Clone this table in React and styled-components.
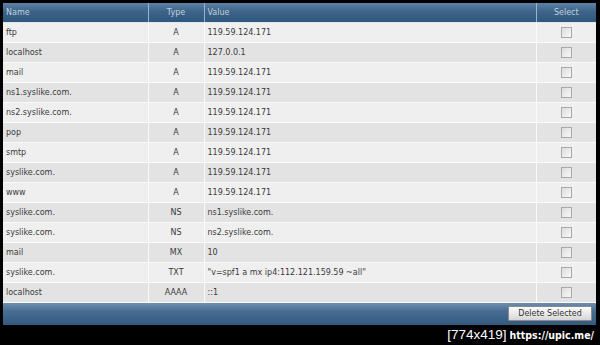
import React from "react";
import styled, { createGlobalStyle } from "styled-components";

const records = [
  { name: "ftp", type: "A", value: "119.59.124.171" },
  { name: "localhost", type: "A", value: "127.0.0.1" },
  { name: "mail", type: "A", value: "119.59.124.171" },
  { name: "ns1.syslike.com.", type: "A", value: "119.59.124.171" },
  { name: "ns2.syslike.com.", type: "A", value: "119.59.124.171" },
  { name: "pop", type: "A", value: "119.59.124.171" },
  { name: "smtp", type: "A", value: "119.59.124.171" },
  { name: "syslike.com.", type: "A", value: "119.59.124.171" },
  { name: "www", type: "A", value: "119.59.124.171" },
  { name: "syslike.com.", type: "NS", value: "ns1.syslike.com." },
  { name: "syslike.com.", type: "NS", value: "ns2.syslike.com." },
  { name: "mail", type: "MX", value: "10" },
  { name: "syslike.com.", type: "TXT", value: '"v=spf1 a mx ip4:112.121.159.59 ~all"' },
  { name: "localhost", type: "AAAA", value: "::1" },
];

export default function App() {
  return (
    <>
      <GlobalStyle />
      <Frame>
        <Table>
          <colgroup>
            <col style={{ width: 145 }} />
            <col style={{ width: 56 }} />
            <col style={{ width: 332 }} />
            <col style={{ width: 60 }} />
          </colgroup>
          <thead>
            <tr>
              <HeadCell>Name</HeadCell>
              <HeadCell $center>Type</HeadCell>
              <HeadCell>Value</HeadCell>
              <HeadCell $center>Select</HeadCell>
            </tr>
          </thead>
          <tbody>
            {records.map((value, index) => (
              <Row key={index} $even={index % 2 === 1}>
                <Cell>{value.name}</Cell>
                <Cell $center>{value.type}</Cell>
                <Cell>{value.value}</Cell>
                <Cell $center>
                  <Check />
                </Cell>
              </Row>
            ))}
          </tbody>
        </Table>
        <Footer>
          <Button>Delete Selected</Button>
        </Footer>
      </Frame>
      <Watermark>
        <span>[774x419]</span>
        <Link>https://upic.me/</Link>
      </Watermark>
    </>
  );
}

const GlobalStyle = createGlobalStyle`
  html, body {
    margin: 0;
    background: #000;
  }
  body {
    font-family: "DejaVu Sans", Verdana, sans-serif;
  }
`;

const Frame = styled.div`
  margin: 3px 4px 0 3px;
  width: 593px;
  background: #efefef;
`;

const Table = styled.table`
  width: 593px;
  table-layout: fixed;
  border-collapse: collapse;
  font-size: 8px;
`;

const HeadCell = styled.th`
  height: 19px;
  padding: 0 3px;
  box-sizing: border-box;
  font-weight: normal;
  text-align: ${(p) => (p.$center ? "center" : "left")};
  color: #c3d1df;
  background: linear-gradient(#5e82a6, #3d6389 45%, #2e577f);
  border-left: 1px solid #9cb3ca;
  border-bottom: 1px solid #dfe6ec;

  &:first-child {
    border-left: none;
  }
`;

const Row = styled.tr`
  background: ${(p) => (p.$even ? "#e3e3e3" : "#efefef")};
`;

const Cell = styled.td`
  height: 20px;
  padding: 0 3px;
  box-sizing: border-box;
  color: #3a3a3a;
  text-align: ${(p) => (p.$center ? "center" : "left")};
  white-space: nowrap;
  border-bottom: 1px solid #fafafa;
  border-left: 1px solid #fafafa;

  &:first-child {
    border-left: none;
  }
`;

const Check = styled.span`
  display: inline-block;
  vertical-align: middle;
  width: 9px;
  height: 9px;
  border: 1px solid #a9a9a9;
  background: linear-gradient(135deg, #dcdcdc, #f8f8f8);
`;

const Footer = styled.div`
  height: 22px;
  display: flex;
  align-items: center;
  justify-content: flex-end;
  padding-right: 4px;
  background: linear-gradient(#6e8fb0, #4a6e93 35%, #33597f);
`;

const Button = styled.button`
  width: 84px;
  height: 15px;
  padding: 0;
  font-family: "DejaVu Sans", Verdana, sans-serif;
  font-size: 8px;
  color: #333;
  border: 1px solid #8a8a8a;
  border-radius: 1px;
  background: linear-gradient(#fbfbfb, #e6e6e6 60%, #d6d6d6);
`;

const Watermark = styled.div`
  display: flex;
  justify-content: flex-end;
  align-items: center;
  gap: 3px;
  height: 20px;
  padding-right: 6px;
  color: #fff;
  font-family: "Liberation Sans", Arial, sans-serif;
  font-size: 13.5px;
`;

const Link = styled.span`
  font-family: "DejaVu Sans Condensed", "DejaVu Sans", sans-serif;
  font-size: 10.5px;
  font-weight: bold;
`;
